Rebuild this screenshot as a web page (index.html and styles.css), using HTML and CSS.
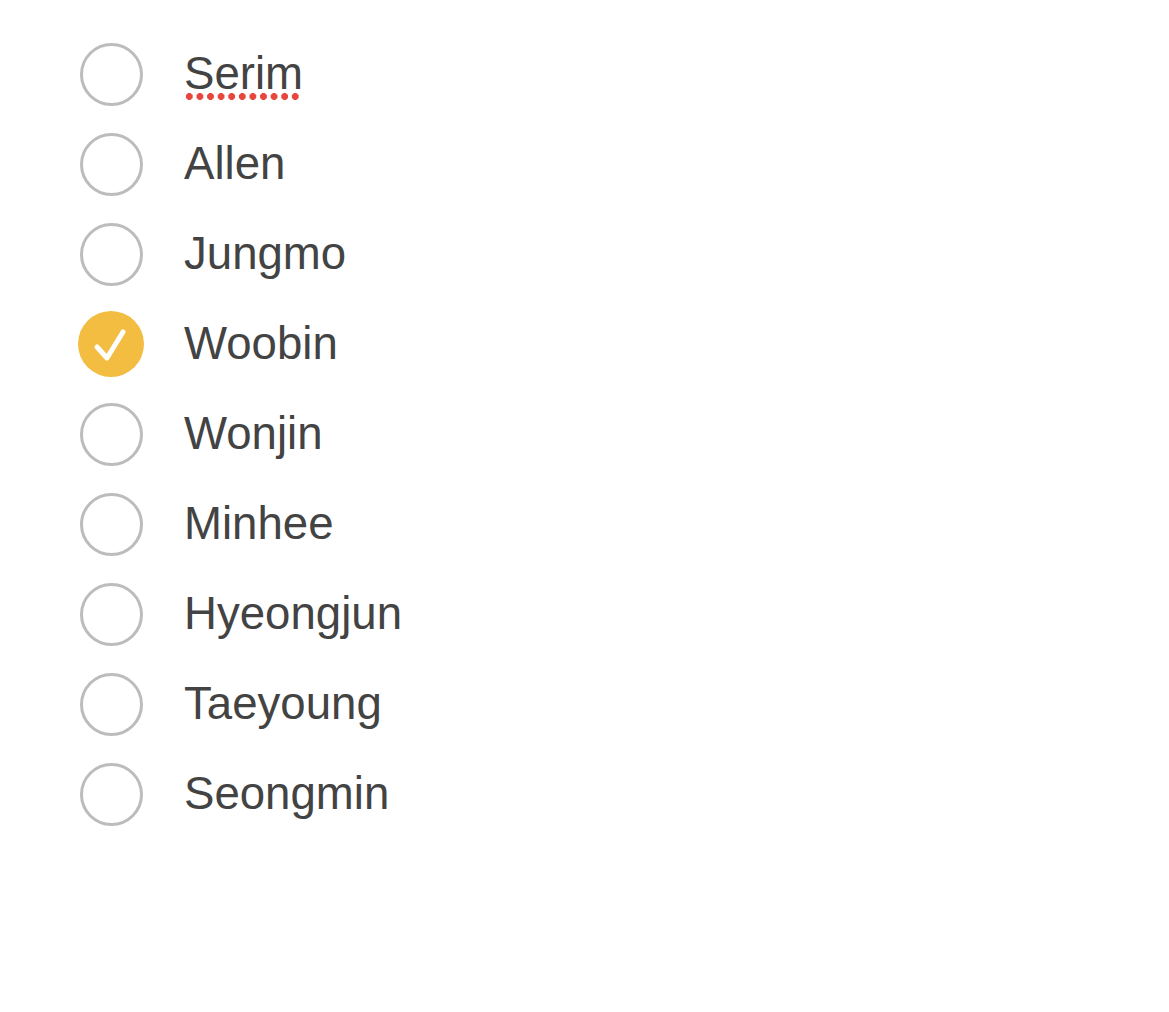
FILE: index.html
```html
<!DOCTYPE html>
<html>
<head>
<meta charset="utf-8">
<link rel="stylesheet" href="styles.css">
</head>
<body>
<ul class="list">
  <li class="row"><span class="slot"><span class="radio"></span></span><span class="label"><span class="misspelled">Serim</span></span></li>
  <li class="row"><span class="slot"><span class="radio"></span></span><span class="label">Allen</span></li>
  <li class="row"><span class="slot"><span class="radio"></span></span><span class="label">Jungmo</span></li>
  <li class="row"><span class="slot"><span class="radio checked"><svg viewBox="0 0 66 66" width="66" height="66"><path d="M19 36 L29 47 L45 21" fill="none" stroke="#fff" stroke-width="5" stroke-linecap="round" stroke-linejoin="round"/></svg></span></span><span class="label">Woobin</span></li>
  <li class="row"><span class="slot"><span class="radio"></span></span><span class="label">Wonjin</span></li>
  <li class="row"><span class="slot"><span class="radio"></span></span><span class="label">Minhee</span></li>
  <li class="row"><span class="slot"><span class="radio"></span></span><span class="label">Hyeongjun</span></li>
  <li class="row"><span class="slot"><span class="radio"></span></span><span class="label">Taeyoung</span></li>
  <li class="row"><span class="slot"><span class="radio"></span></span><span class="label">Seongmin</span></li>
</ul>
</body>
</html>
```
FILE: styles.css
```css
html, body {
  margin: 0;
  padding: 0;
  background: #fff;
}
.list {
  list-style: none;
  margin: 0;
  padding: 29px 0 0 78px;
  font-family: "Liberation Sans", Arial, sans-serif;
}
.row {
  display: flex;
  align-items: center;
  height: 90px;
}
.slot {
  width: 66px;
  height: 66px;
  flex: none;
  display: flex;
  align-items: center;
  justify-content: center;
}
.radio {
  box-sizing: border-box;
  width: 63px;
  height: 63px;
  border-radius: 50%;
  border: 3px solid #bcbcbc;
  display: flex;
  align-items: center;
  justify-content: center;
}
.radio.checked {
  width: 66px;
  height: 66px;
  border: none;
  background: #f2bd40;
}
.label {
  margin-left: 40px;
  font-size: 45.6px;
  color: #434343;
  line-height: 1;
}
.misspelled {
  position: relative;
  display: inline-block;
}
.misspelled::after {
  content: "";
  position: absolute;
  left: 0;
  top: 42px;
  width: 117px;
  height: 7px;
  background-image: radial-gradient(circle, #e8453c 3.2px, transparent 3.7px);
  background-size: 10.6px 7px;
  background-repeat: repeat-x;
  background-position: 0 0;
}
```
